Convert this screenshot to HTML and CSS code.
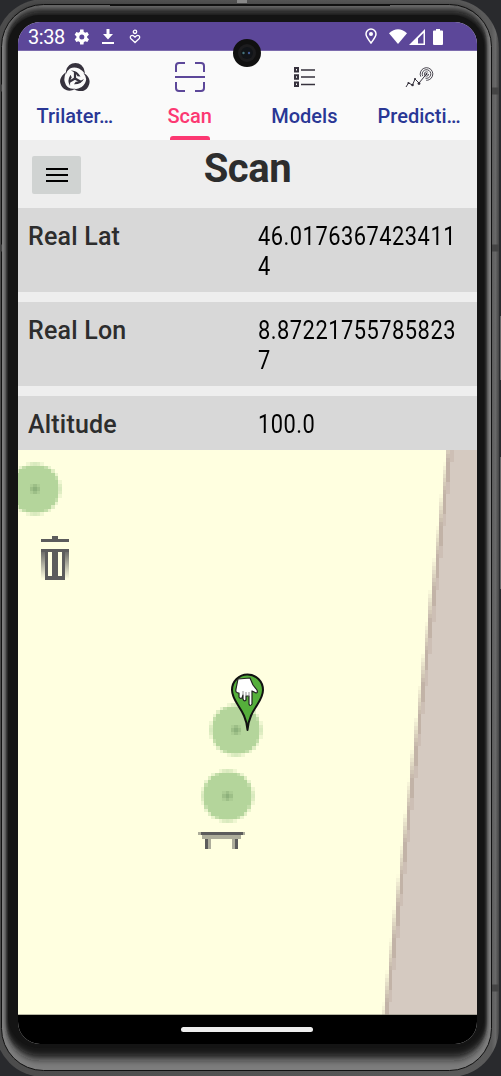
FILE: index.html
```
<!DOCTYPE html>
<html lang="en">
<head>
<meta charset="utf-8">
<title>Scan</title>
<link rel="stylesheet" href="styles.css">
</head>
<body>
<div class="phone">
<svg class="frame" viewBox="0 0 501 1076" aria-hidden="true">
  <defs>
    <linearGradient id="side" x1="0" x2="1" y1="0" y2="0">
      <stop offset="0" stop-color="#4c4c4c"/><stop offset=".985" stop-color="#5a5a5a"/><stop offset=".993" stop-color="#696969"/><stop offset="1" stop-color="#454545"/>
    </linearGradient>
    <filter id="soft" x="-5%" y="-5%" width="110%" height="110%"><feGaussianBlur stdDeviation="1.500 4"/></filter>
  </defs>
  <rect width="501" height="1076" fill="#292a2d"/>
  <rect x="-5" y="-1" width="504" height="1078" rx="49" fill="url(#side)"/>
  <rect x="1.500" y="4.500" width="490" height="1066" rx="42" fill="#7d7d7d" stroke="#111"/>
  <rect x="6" y="9" width="481" height="1049" rx="34" fill="#141414" filter="url(#soft)"/>
  <rect x="8" y="15" width="476" height="1033" rx="32" fill="#141414"/>
  <path d="M110 5h280" stroke="#111" stroke-width="2"/>
  <path d="M242 0v3" stroke="#888" stroke-width="10"/>
  <path d="M0 88h2M0 248h2M492 91h7M492 248h7M492 988h7" stroke="#444" stroke-width="7"/>
  <path d="M500.500 316v64M500.500 457v132" stroke="#666"/>
</svg>
<main class="screen">
  <header class="status">
    <div class="group">
      <span class="time">3:38</span>
      <svg class="gear" viewBox="0 0 24 24"><path fill="#fff" fill-rule="evenodd" d="M19.400 13a7.500 7.500 0 0 0 0-2l2.100-1.600-2-3.500-2.500 1a8 8 0 0 0-1.700-1L15 3h-4l-.4 2.900a8 8 0 0 0-1.700 1l-2.500-1-2 3.500L6.500 11a7.500 7.500 0 0 0 0 2l-2.100 1.600 2 3.500 2.500-1a8 8 0 0 0 1.700 1L11 21h4l.4-2.900a8 8 0 0 0 1.700-1l2.500 1 2-3.500zM13 15a3 3 0 1 1 0-6 3 3 0 0 1 0 6z"/></svg>
      <svg class="down" viewBox="0 0 14 17"><path fill="#fff" d="M5.500 1h3v5H12l-5 5.500L2 6h3.500zM1 14h12v2H1z"/></svg>
      <svg class="care" viewBox="0 0 12 15"><g fill="none" stroke="#fff" stroke-width="1.300"><circle cx="6" cy="2.800" r="1.700"/><path d="M6 13.500 2 9.800C-.1 7.500 3 4.500 6 8.200c3-3.700 6.100-.7 4 1.600z"/></g></svg>
    </div>
    <div class="group signals">
      <svg class="pin" viewBox="0 0 12 17"><path fill="none" stroke="#fff" stroke-width="1.500" d="M6 15C2.500 10.500 1 8.500 1 6a5 5 0 0 1 10 0c0 2.500-1.500 4.500-5 9z"/><circle cx="6" cy="6" r="2" fill="#fff"/></svg>
      <svg class="wifi" viewBox="0 0 18 16"><path fill="#fff" d="M0 4.200Q9-3.500 18 4.200L9 15z"/></svg>
      <svg class="cell" viewBox="0 0 16 16"><path fill="#fff" fill-rule="evenodd" d="M0 16 16 0v16zM9 14.500h5.500V4L9 9.500z"/></svg>
      <svg class="battery" viewBox="0 0 10 16"><path fill="#fff" d="M3 0h4v1.500h2q1 0 1 1V15q0 1-1 1H1q-1 0-1-1V2.500q0-1 1-1h2z"/></svg>
    </div>
  </header>
  <nav class="tabs">
    <a class="tab"><svg viewBox="0 0 32 32">
      <defs><g id="blade"><path fill="#36323d" d="M7 10Q9 2 16.500 2q7 0 9 8l.5 3q-3-4-6-5.500-5-2-9 0Q8.500 9 7 13z"/><path fill="#36323d" d="M12 9.500q6-.5 9.500 6l-3-.3Q17 12 12 9.500z"/><path stroke="#36323d" stroke-width="2.200" d="M16 17.500V11"/></g></defs>
      <use href="#blade"/><use href="#blade" transform="rotate(120 16 17.500)"/><use href="#blade" transform="rotate(240 16 17.500)"/></svg><span>Trilater…</span></a>
    <a class="tab active"><svg viewBox="0 0 32 32"><path fill="none" stroke="#5c4799" stroke-width="2" d="M2 11V5q0-3 3-3h6M21 2h6q3 0 3 3v6M30 21v6q0 3-3 3h-6M11 30H5q-3 0-3-3v-6M1 16h30"/></svg><span>Scan</span></a>
    <a class="tab"><svg class="list" viewBox="0 0 32 32"><g fill="none" stroke="#36323d" stroke-width="2"><path d="M7 7h3v3.500H7zM7 14.300h3v3.500H7zM7 21.600h3v3.500H7z"/><path stroke-width="1.500" d="M13 9h14M13 16h14M13 23.500h14"/></g></svg><span>Models</span></a>
    <a class="tab"><svg class="trend" viewBox="0 0 32 32"><g fill="none" stroke="#36323d" stroke-width="1"><path d="m3 26 2.500-4 4 2 2.500-6 4 4 7.500-9"/><g stroke-width=".8"><circle cx="23.500" cy="13" r="2.200" stroke-dasharray="11 3"/><circle cx="23.500" cy="13" r="4.300" stroke-dasharray="23 4" transform="rotate(150 23.500 13)"/><circle cx="23.500" cy="13" r="6.300" stroke-dasharray="32 8" transform="rotate(155 23.500 13)"/></g></g><g fill="#36323d"><circle cx="5.500" cy="22" r="1.100"/><circle cx="9.500" cy="24" r="1.300"/><circle cx="12" cy="18" r="1.100"/><circle cx="16" cy="22.500" r="1.400"/><circle cx="23.500" cy="13" r="1"/></g></svg><span>Predicti…</span></a>
  </nav>
  <section class="heading">
    <button class="menu" aria-label="Menu"><i></i><i></i><i></i></button>
    <h1>Scan</h1>
  </section>
  <section class="rows">
    <div class="row"><b>Real Lat</b><div class="value"><span>46.0176367423411</span><span>4</span></div></div>
    <div class="row"><b>Real Lon</b><div class="value"><span>8.87221755785823</span><span>7</span></div></div>
    <div class="row"><b>Altitude</b><div class="value"><span>100.0</span></div></div>
  </section>
  <svg class="map" viewBox="18 450 459 565">
    <path fill="#ffffe0" d="M18 450h459v565H18z"/>
    <g id="building" shape-rendering="crispEdges"></g>
    <g id="trees" shape-rendering="crispEdges"></g>
    <defs><linearGradient id="bin" x2="0" y2="1"><stop stop-color="#5c5c5c"/><stop offset="1" stop-color="#5c5c5c" stop-opacity="0"/></linearGradient></defs>
    <path fill="url(#bin)" d="M41 549h28v30H41z"/>
    <path fill="#5c5c5c" d="M41 539h11v-3h6v3h11v3H41zM41 549h28v3H41z"/>
    <path fill="#5c5c5c" d="M45 549h20v31H45z"/>
    <path fill="#ffffe0" d="M48 552h4v24h-4zM58 552h4v24h-4z"/>
    <path fill="#adad9b" d="M198 832h47v3h-4v4h-39v-4h-4zM208 839h3v10h-3zM232 839h3v10h-3z"/>
    <path fill="#5c5c5c" d="M201 832h42v3h-42zM205 839h3v10h-3zM235 839h3v10h-3z"/>
    <path fill="#55af3b" stroke="#111" stroke-width="2" stroke-linejoin="round" d="M247.500 730C246 709 232 703 232 690a15.500 15.500 0 0 1 31 0c0 13-14 19-15.500 40z"/>
    <path fill="#fff" stroke="#222" stroke-width="1.200" stroke-linejoin="round" d="m238 679 12-1 3 7 4 5q1 3-1 3l-4-2v13q-2 3-3 0v-8h-3v4q-2 2-3-1v-4l-1 3q-2 1-3-1v-4q-4 0-3-4z"/>
    <path fill="none" stroke="#777" stroke-width=".8" d="M243 691v4M246 692v4M249 692v5"/>
    <path d="M18 1014.500h459" stroke="#8a887c" opacity=".6"/>
  </svg>
  <footer class="gesture"><i></i></footer>
</main>
<svg class="camera" viewBox="0 0 30 30" aria-hidden="true"><circle cx="15" cy="15" r="14" fill="#101010"/><circle cx="15" cy="15" r="9" fill="#1c1c1e"/><circle cx="15" cy="15" r="6" fill="#111418"/><circle cx="11.500" cy="15" r="1.200" fill="#47737c"/><circle cx="17" cy="15" r="1.200" fill="#425b94"/></svg>
</div>
<script src="map.js"></script>
</body>
</html>
```
FILE: map.js
```
// Draws the over-zoomed map tile features as enlarged pixels.
const NS = 'http://www.w3.org/2000/svg';
const CELL = 3.6;

function block(parent, x, y, w, h, fill, opacity = 1) {
  const r = document.createElementNS(NS, 'rect');
  Object.entries({ x, y, width: w, height: h, fill, opacity }).forEach(([k, v]) => r.setAttribute(k, v));
  parent.appendChild(r);
}

const trees = document.getElementById('trees');
for (const [cx, cy] of [[35, 489], [236, 730], [227.500, 796]]) {
  for (let j = -7; j <= 7; j++) {
    for (let i = -7; i <= 7; i++) {
      const cover = Math.min(1, Math.max(0, 7.500 - Math.hypot(i, j)));
      if (cover < 0.1) continue;
      const x0 = Math.round(cx + (i - 0.5) * CELL), x1 = Math.round(cx + (i + 0.5) * CELL);
      const y0 = Math.round(cy + (j - 0.5) * CELL), y1 = Math.round(cy + (j + 0.5) * CELL);
      const d = Math.max(Math.abs(i), Math.abs(j));
      const corner = Math.abs(i) + Math.abs(j) === 2;
      const fill = d === 0 ? '#8db17b' : d === 1 ? (corner ? '#abcc93' : '#9dbf87') : '#b4d59b';
      block(trees, x0, y0, x1 - x0, y1 - y0, fill, cover);
    }
  }
}

const building = document.getElementById('building');
for (let y = 450; y < 1015; y += 4) {
  const h = Math.min(4, 1015 - y);
  const edge = 447.500 - (y - 450) * 64 / 565;
  const col = Math.floor(edge / CELL);
  const frac = edge / CELL - col;
  const x = Math.round(col * CELL);
  const x1 = Math.round((col + 1) * CELL);
  const x2 = Math.round((col + 2) * CELL);
  block(building, x2, y, 477 - x2, h, '#d5cac1');
  block(building, x, y, x1 - x, h, '#c2b3a7', 1 - frac);
  block(building, x1, y, x2 - x1, h, frac > 0.4 ? '#c2b3a7' : '#cdbfb5');
}
```
FILE: styles.css
```
* { box-sizing: border-box; }
body { margin: 0; background: #292a2d; font-family: Roboto, sans-serif; }
svg { display: block; flex: none; }
.phone { position: relative; width: 501px; height: 1076px; padding: 22px 24px 32px 18px; overflow: hidden; }
.frame { position: absolute; inset: 0; width: 501px; height: 1076px; }
.screen { position: relative; width: 459px; height: 1022px; border-radius: 22px; overflow: hidden; background: #eee; display: flex; flex-direction: column; }
.status { height: 29px; flex: none; background: #5c4799; border-bottom: 1px solid #7c6bad; display: flex; justify-content: space-between; padding: 1px 34px 0 10px; color: #fff; }
.group { display: flex; align-items: center; }
.time { font-size: 20px; line-height: 30px; width: 44px; letter-spacing: -.4px; }
.gear { width: 20px; height: 20px; margin-left: -1px; }
.down { width: 14px; height: 17px; margin-left: 10px; }
.care { width: 12px; height: 15px; margin-left: 14px; }
.pin { width: 12px; height: 17px; margin-right: 12px; }
.wifi { width: 18px; height: 16px; margin-right: 2px; }
.cell { width: 16px; height: 16px; margin-right: 8px; }
.battery { width: 10px; height: 16px; }
.tabs { height: 89px; flex: none; display: grid; grid-template-columns: repeat(4, 1fr); background: #fafafa; }
.tab { display: flex; flex-direction: column; align-items: center; position: relative; padding-top: 10px; color: #293795; font-size: 20px; font-weight: 500; line-height: 24px; }
.tab span { margin-left: -1px; }
.tab svg { width: 32px; height: 32px; margin-bottom: 11px; }
.tab .list, .tab .trend { margin-left: -2px; }
.active { color: #fc3872; }
.active::after { content: ""; position: absolute; bottom: 0; width: 40px; height: 4px; border-radius: 3px 3px 0 0; background: #fc3872; }
.heading { height: 68px; flex: none; display: grid; grid-template-columns: 1fr auto 1fr; padding: 0 14px; }
.menu { width: 49px; height: 38px; margin: 16px 0 0; border: 0; border-radius: 2px; background: #d0d3d2; padding: 0 13px 0 14px; display: flex; flex-direction: column; justify-content: center; gap: 4px; }
.menu i { height: 2px; background: #000; }
h1 { margin: 4px 0 0; font-size: 40px; line-height: 50px; color: #2d2d2d; font-weight: 700; letter-spacing: -.4px; }
.rows { height: 242px; flex: none; overflow: hidden; display: flex; flex-direction: column; gap: 10px; }
.row { height: 84px; flex: none; display: grid; grid-template-columns: 229.500px 1fr; padding: 13px 10px 11px; background: #d8d8d8; line-height: 30px; font-size: 25px; }
.row b { color: #2d2d2d; font-weight: 500; padding-top: 1px; letter-spacing: .2px; }
.value { color: #000; font-size: 26px; }
.value span { display: block; width: max-content; transform: scaleX(.84); transform-origin: left; letter-spacing: .6px; }
.map { width: 459px; height: 565px; }
.gesture { height: 29px; background: #000; display: flex; align-items: center; justify-content: center; padding-right: 1px; }
.gesture i { width: 132px; height: 5px; border-radius: 3px; background: #eee; }
.camera { position: absolute; left: 232px; top: 38px; width: 30px; height: 30px; }
```
